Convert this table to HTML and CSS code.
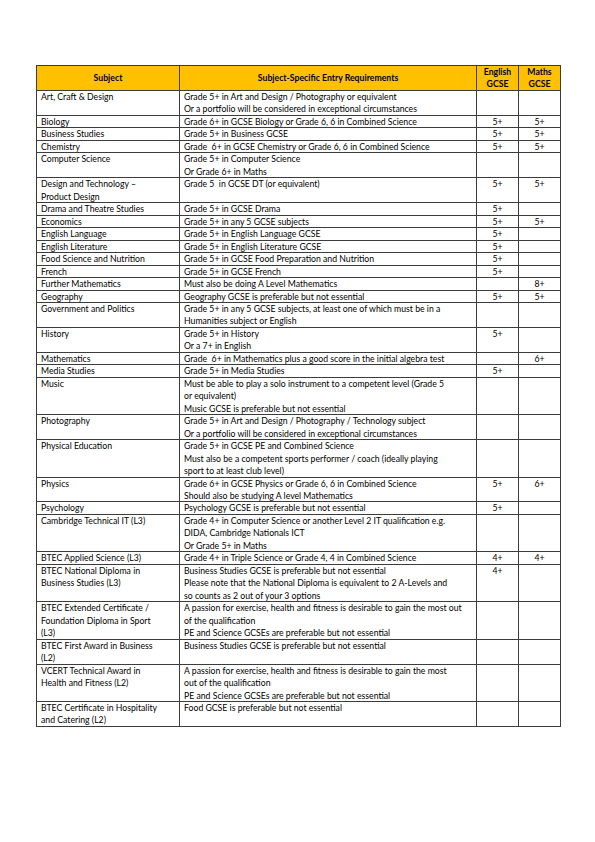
FILE: index.html
```html
<!DOCTYPE html>
<html lang="en">
<head>
<meta charset="utf-8">
<title>Subject Entry Requirements</title>
<link rel="stylesheet" href="styles.css">
</head>
<body>
<table class="req">
<colgroup>
<col class="c-subj"><col class="c-req"><col class="c-eng"><col class="c-math">
</colgroup>
<thead>
<tr><th>Subject</th><th>Subject-Specific Entry Requirements</th><th>English<br>GCSE</th><th>Maths<br>GCSE</th></tr>
</thead>
<tbody>
<tr><td>Art, Craft &amp; Design</td><td>Grade 5+ in Art and Design / Photography or equivalent<br>Or a portfolio will be considered in exceptional circumstances</td><td class="g"></td><td class="g"></td></tr>
<tr><td>Biology</td><td>Grade 6+ in GCSE Biology or Grade 6, 6 in Combined Science</td><td class="g">5+</td><td class="g">5+</td></tr>
<tr><td>Business Studies</td><td>Grade 5+ in Business GCSE</td><td class="g">5+</td><td class="g">5+</td></tr>
<tr><td>Chemistry</td><td>Grade &nbsp;6+ in GCSE Chemistry or Grade 6, 6 in Combined Science</td><td class="g">5+</td><td class="g">5+</td></tr>
<tr><td>Computer Science</td><td>Grade 5+ in Computer Science<br>Or Grade 6+ in Maths</td><td class="g"></td><td class="g"></td></tr>
<tr><td>Design and Technology –<br>Product Design</td><td>Grade 5 &nbsp;in GCSE DT (or equivalent)</td><td class="g">5+</td><td class="g">5+</td></tr>
<tr><td>Drama and Theatre Studies</td><td>Grade 5+ in GCSE Drama</td><td class="g">5+</td><td class="g"></td></tr>
<tr><td>Economics</td><td>Grade 5+ in any 5 GCSE subjects</td><td class="g">5+</td><td class="g">5+</td></tr>
<tr><td>English Language</td><td>Grade 5+ in English Language GCSE</td><td class="g">5+</td><td class="g"></td></tr>
<tr><td>English Literature</td><td>Grade 5+ in English Literature GCSE</td><td class="g">5+</td><td class="g"></td></tr>
<tr><td>Food Science and Nutrition</td><td>Grade 5+ in GCSE Food Preparation and Nutrition</td><td class="g">5+</td><td class="g"></td></tr>
<tr><td>French</td><td>Grade 5+ in GCSE French</td><td class="g">5+</td><td class="g"></td></tr>
<tr><td>Further Mathematics</td><td>Must also be doing A Level Mathematics</td><td class="g"></td><td class="g">8+</td></tr>
<tr><td>Geography</td><td>Geography GCSE is preferable but not essential</td><td class="g">5+</td><td class="g">5+</td></tr>
<tr><td>Government and Politics</td><td>Grade 5+ in any 5 GCSE subjects, at least one of which must be in a<br>Humanities subject or English</td><td class="g"></td><td class="g"></td></tr>
<tr><td>History</td><td>Grade 5+ in History<br>Or a 7+ in English</td><td class="g">5+</td><td class="g"></td></tr>
<tr><td>Mathematics</td><td>Grade &nbsp;6+ in Mathematics plus a good score in the initial algebra test</td><td class="g"></td><td class="g">6+</td></tr>
<tr><td>Media Studies</td><td>Grade 5+ in Media Studies</td><td class="g">5+</td><td class="g"></td></tr>
<tr><td>Music</td><td>Must be able to play a solo instrument to a competent level (Grade 5<br>or equivalent)<br>Music GCSE is preferable but not essential</td><td class="g"></td><td class="g"></td></tr>
<tr><td>Photography</td><td>Grade 5+ in Art and Design / Photography / Technology subject<br>Or a portfolio will be considered in exceptional circumstances</td><td class="g"></td><td class="g"></td></tr>
<tr><td>Physical Education</td><td>Grade 5+ in GCSE PE and Combined Science<br>Must also be a competent sports performer / coach (ideally playing<br>sport to at least club level)</td><td class="g"></td><td class="g"></td></tr>
<tr><td>Physics</td><td>Grade 6+ in GCSE Physics or Grade 6, 6 in Combined Science<br>Should also be studying A level Mathematics</td><td class="g">5+</td><td class="g">6+</td></tr>
<tr><td>Psychology</td><td>Psychology GCSE is preferable but not essential</td><td class="g">5+</td><td class="g"></td></tr>
<tr><td>Cambridge Technical IT (L3)</td><td>Grade 4+ in Computer Science or another Level 2 IT qualification e.g.<br>DIDA, Cambridge Nationals ICT<br>Or Grade 5+ in Maths</td><td class="g"></td><td class="g"></td></tr>
<tr><td>BTEC Applied Science (L3)</td><td>Grade 4+ in Triple Science or Grade 4, 4 in Combined Science</td><td class="g">4+</td><td class="g">4+</td></tr>
<tr><td>BTEC National Diploma in<br>Business Studies (L3)</td><td>Business Studies GCSE is preferable but not essential<br>Please note that the National Diploma is equivalent to 2 A-Levels and<br>so counts as 2 out of your 3 options</td><td class="g">4+</td><td class="g"></td></tr>
<tr><td>BTEC Extended Certificate /<br>Foundation Diploma in Sport<br>(L3)</td><td>A passion for exercise, health and fitness is desirable to gain the most out<br>of the qualification<br>PE and Science GCSEs are preferable but not essential</td><td class="g"></td><td class="g"></td></tr>
<tr><td>BTEC First Award in Business<br>(L2)</td><td>Business Studies GCSE is preferable but not essential</td><td class="g"></td><td class="g"></td></tr>
<tr><td>VCERT Technical Award in<br>Health and Fitness (L2)</td><td>A passion for exercise, health and fitness is desirable to gain the most<br>out of the qualification<br>PE and Science GCSEs are preferable but not essential</td><td class="g"></td><td class="g"></td></tr>
<tr><td>BTEC Certificate in Hospitality<br>and Catering (L2)</td><td>Food GCSE is preferable but not essential</td><td class="g"></td><td class="g"></td></tr>
</tbody>
</table>
</body>
</html>
```

FILE: styles.css
```css
html, body {
  margin: 0;
  padding: 0;
  background: #ffffff;
}
body {
  padding: 65px 0 0 36px;
  font-family: Lato, "Liberation Sans", sans-serif;
  font-size: 8.7px;
  color: #000000;
}
.req {
  border-collapse: collapse;
  table-layout: fixed;
  width: 524px;
}
.c-subj { width: 143px; }
.c-req { width: 297px; }
.c-eng { width: 42px; }
.c-math { width: 42px; }
.req th, .req td {
  border: 1px solid #3c3c3c;
  line-height: 12.47px;
  padding: 0 2px 0 4px;
  vertical-align: top;
  text-align: left;
  white-space: nowrap;
}
.req td::after {
  content: "";
  display: block;
  margin-top: -1px;
}
.req th {
  background: #ffc000;
  font-weight: 700;
  text-align: center;
  vertical-align: middle;
  line-height: 11.9px;
  padding: 0 2px;
  height: 24px;
}
.req td.g {
  text-align: center;
  padding: 0 2px;
}
```
